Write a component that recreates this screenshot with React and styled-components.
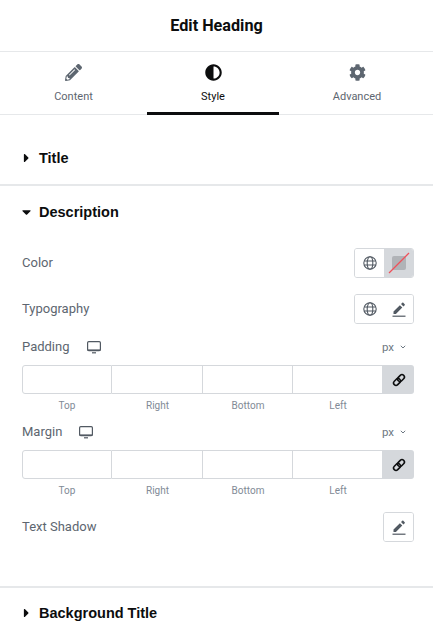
import React from 'react';
import styled, { createGlobalStyle } from 'styled-components';
import { FaPencilAlt, FaCog, FaCaretRight, FaCaretDown, FaAdjust } from 'react-icons/fa';

const GlobalStyle = createGlobalStyle`
  html, body { margin: 0; padding: 0; background: #fff; }
  body { font-family: Roboto, "Liberation Sans", sans-serif; overflow: hidden; }
`;

const Panel = styled.div`
  width: 433px;
  height: 643px;
  overflow: hidden;
  display: flex;
  flex-direction: column;
`;

const Header = styled.header`
  height: 51px;
  flex: none;
  display: flex;
  align-items: center;
  justify-content: center;
  font-size: 16.2px;
  font-weight: 700;
  color: #0c0d0e;
  border-bottom: 1px solid #e6e8ea;
`;

const Tabs = styled.nav`
  height: 62px;
  flex: none;
  display: grid;
  grid-template-columns: 147px 132px 156px;
  border-bottom: 1px solid #e6e8ea;
`;

const Tab = styled.div`
  display: flex;
  flex-direction: column;
  align-items: center;
  padding-top: 12px;
  box-sizing: border-box;
  font-size: 11px;
  gap: 9px;
  color: ${p => (p.$active ? '#0c0d0e' : '#5d6670')};
  border-bottom: 3px solid ${p => (p.$active ? '#0c0d0e' : 'transparent')};
  margin-bottom: -1px;
  svg { display: block; font-size: 17px; }
`;

const Section = styled.section`
  flex: none;
  border-bottom: 2px solid #e6e8ea;
  height: ${p => p.$height}px;
  box-sizing: border-box;
`;

const SectionHead = styled.div`
  height: 26px;
  margin-top: ${p => p.$top}px;
  padding-left: 22px;
  display: flex;
  align-items: center;
  gap: 8px;
  font-family: "Liberation Sans", Arial, sans-serif;
  font-size: 14.5px;
  font-weight: 700;
  color: #0c0d0e;
  svg { font-size: 14px; width: 9px; flex: none; }
`;

const Body = styled.div`
  padding: 23px 19px 0 22px;
  display: flex;
  flex-direction: column;
`;

const Row = styled.div`
  display: flex;
  align-items: center;
  justify-content: space-between;
  height: 30px;
  margin-top: ${p => p.$top || 0}px;
  margin-bottom: ${p => p.$gap || 0}px;
`;

const Label = styled.span`
  font-size: 13px;
  padding-bottom: 2px;
  color: #5d6670;
`;

const ButtonGroup = styled.div`
  display: flex;
  height: 30px;
  box-sizing: border-box;
  border: 1px solid #d5d8dc;
  border-radius: 3px;
  overflow: hidden;
`;

const IconButton = styled.div`
  width: 29px;
  display: flex;
  align-items: center;
  justify-content: center;
  color: #515962;
  background: ${p => (p.$filled ? '#d5d8dc' : '#fff')};
  & + & { border-left: ${p => (p.$filled ? '0' : '1px solid #d5d8dc')}; }
`;

const NoColor = styled.div`
  position: relative;
  width: 14px;
  height: 14px;
  border-radius: 2px;
  background: #b0b3b7;
  svg { position: absolute; left: -5px; top: -5px; }
`;

const LabelGroup = styled.div`
  display: flex;
  align-items: center;
  gap: ${p => p.$gap}px;
  svg { display: block; color: #515962; }
`;

const Unit = styled.div`
  display: flex;
  align-items: center;
  gap: 6px;
  font-size: 11.5px;
  padding-bottom: 2px;
  color: #6d7882;
  padding-right: 8px;
`;

const DimRow = styled.div`
  height: 15px;
  display: flex;
  align-items: center;
  justify-content: space-between;
  margin-bottom: 10px;
`;

const Fields = styled.div`
  display: grid;
  grid-template-columns: 90px 91px 90px 90px 31px;
  height: 29px;
`;

const Field = styled.div`
  box-sizing: border-box;
  border: 1px solid #d5d8dc;
  border-left-width: ${p => (p.$first ? 1 : 0)}px;
  border-radius: ${p => (p.$first ? '3px 0 0 3px' : '0')};
`;

const Linker = styled.div`
  background: #d5d8dc;
  border-radius: 0 3px 3px 0;
  display: flex;
  align-items: center;
  justify-content: center;
  color: #0c0d0e;
`;

const Captions = styled.div`
  display: grid;
  grid-template-columns: 90px 91px 90px 90px 31px;
  margin: 6px 0 13px;
  font-size: 10px;
  line-height: 12px;
  color: #818a96;
  text-align: center;
`;

const PenIcon = () => (
  <svg width="16" height="16" viewBox="0 0 16 16" fill="currentColor">
    <path d="M2.5 10.6v2.4h2.4l6.4-6.4-2.4-2.4zM10 3.1l2.4 2.4 1.3-1.3c.3-.3.3-.7 0-1l-1.4-1.4c-.3-.3-.7-.3-1 0z" />
    <rect x="1.5" y="14.6" width="13" height="1.2" />
  </svg>
);

const Globe = () => (
  <svg width="14" height="14" viewBox="0 0 14 14" fill="none" stroke="currentColor" strokeWidth="1.1">
    <circle cx="7" cy="7" r="6.2" />
    <ellipse cx="7" cy="7" rx="2.8" ry="6.2" />
    <path d="M1.2 5h11.6M1.2 9h11.6" />
  </svg>
);

const Desktop = () => (
  <svg width="14" height="13" viewBox="0 0 14 13" fill="none">
    <rect x="0.6" y="0.6" width="12.8" height="9" rx="1.2" stroke="currentColor" strokeWidth="1.2" />
    <rect x="0.6" y="8.4" width="12.8" height="1.6" fill="currentColor" />
    <rect x="5" y="11.2" width="4" height="1.2" fill="currentColor" />
  </svg>
);

const LinkIcon = () => (
  <svg width="14" height="14" viewBox="0 0 14 14" fill="none" stroke="currentColor" strokeWidth="1.6">
    <g transform="rotate(-45 7 7)">
      <rect x="0.4" y="4.6" width="7.6" height="4.8" rx="2.4" />
      <rect x="6" y="4.6" width="7.6" height="4.8" rx="2.4" />
    </g>
  </svg>
);

const Dimension = ({ name }) => (
  <>
    <DimRow>
      <LabelGroup $gap={17}>
        <Label>{name}</Label>
        <Desktop />
      </LabelGroup>
      <Unit>
        px
        <svg width="6" height="4" viewBox="0 0 6 4"><path d="M.8.8L3 3 5.2.8" fill="none" stroke="#6d7882" /></svg>
      </Unit>
    </DimRow>
    <Fields>
      <Field $first />
      <Field />
      <Field />
      <Field />
      <Linker><LinkIcon /></Linker>
    </Fields>
    <Captions>
      <span>Top</span>
      <span>Right</span>
      <span>Bottom</span>
      <span>Left</span>
    </Captions>
  </>
);

export default function App() {
  return (
    <Panel>
      <GlobalStyle />
      <Header>Edit Heading</Header>
      <Tabs>
        <Tab><FaPencilAlt />Content</Tab>
        <Tab $active><FaAdjust />Style</Tab>
        <Tab><FaCog />Advanced</Tab>
      </Tabs>
      <Section $height={71}>
        <SectionHead $top={30}><FaCaretRight />Title</SectionHead>
      </Section>
      <Section $height={402}>
        <SectionHead $top={13}><FaCaretDown />Description</SectionHead>
        <Body>
          <Row $gap={16}>
            <Label>Color</Label>
            <ButtonGroup>
              <IconButton><Globe /></IconButton>
              <IconButton $filled>
                <NoColor>
                  <svg width="24" height="24" viewBox="0 0 24 24"><path d="M2 22L22 2" stroke="#f0505a" strokeWidth="1.3" /></svg>
                </NoColor>
              </IconButton>
            </ButtonGroup>
          </Row>
          <Row $gap={16}>
            <Label>Typography</Label>
            <ButtonGroup>
              <IconButton><Globe /></IconButton>
              <IconButton><PenIcon /></IconButton>
            </ButtonGroup>
          </Row>
          <Dimension name="Padding" />
          <Dimension name="Margin" />
          <Row $top={2}>
            <Label>Text Shadow</Label>
            <ButtonGroup>
              <IconButton><PenIcon /></IconButton>
            </ButtonGroup>
          </Row>
        </Body>
      </Section>
      <SectionHead $top={12}><FaCaretRight />Background Title</SectionHead>
    </Panel>
  );
}
